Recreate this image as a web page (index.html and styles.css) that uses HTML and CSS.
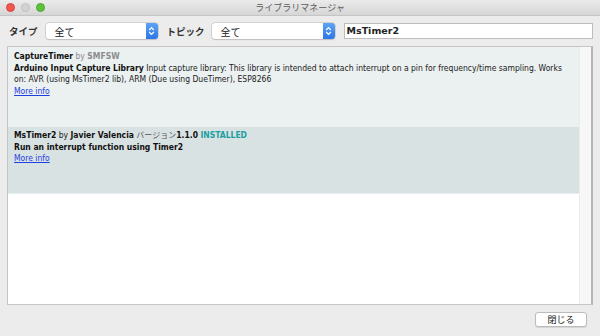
FILE: index.html
```html
<!DOCTYPE html>
<html lang="ja">

<head>
    <meta charset="UTF-8">
    <title>ライブラリマネージャ</title>
    <link rel="stylesheet" href="styles.css">
</head>

<body>
    <div class="window">
        <div class="titlebar">
            <div class="lights">
                <span class="light red"></span>
                <span class="light gray"></span>
                <span class="light green"></span>
            </div>
            <div class="title">ライブラリマネージャ</div>
        </div>

        <div class="toolbar">
            <span class="label">タイプ</span>
            <div class="select sel-type">
                <span>全て</span>
                <span class="chev">
                    <svg width="7" height="10" viewBox="0 0 7 10"><path d="M1.2 4 L3.5 1.6 L5.8 4 M1.2 6 L3.5 8.4 L5.8 6" fill="none" stroke="#fff" stroke-width="1.2"/></svg>
                </span>
            </div>
            <span class="label">トピック</span>
            <div class="select sel-topic">
                <span>全て</span>
                <span class="chev">
                    <svg width="7" height="10" viewBox="0 0 7 10"><path d="M1.2 4 L3.5 1.6 L5.8 4 M1.2 6 L3.5 8.4 L5.8 6" fill="none" stroke="#fff" stroke-width="1.2"/></svg>
                </span>
            </div>
            <div class="search">MsTimer2</div>
        </div>

        <div class="list">
            <div class="rows">
                <div class="row row-a">
                    <div><b>CaptureTimer</b> <span class="by">by <b>SMFSW</b></span></div>
                    <div><b>Arduino Input Capture Library</b> Input capture library: This library is intended to attach interrupt on a pin for frequency/time sampling. Works on: AVR (using MsTimer2 lib), ARM (Due using DueTimer), ESP8266</div>
                    <a href="#">More info</a>
                </div>
                <div class="row row-b">
                    <div><b>MsTimer2</b> by <b>Javier Valencia</b> <span class="ver">バージョン</span><b>1.1.0</b> <b class="installed">INSTALLED</b></div>
                    <div><b>Run an interrupt function using Timer2</b></div>
                    <a href="#">More info</a>
                </div>
            </div>
            <div class="scrollbar"></div>
        </div>

        <div class="footer">
            <button>閉じる</button>
        </div>
    </div>
</body>

</html>
```

FILE: styles.css
```css
* {
    margin: 0;
    padding: 0;
    box-sizing: border-box;
}

body {
    width: 600px;
    height: 336px;
    overflow: hidden;
    background-color: #ececec;
    font-family: "Noto Sans CJK JP", sans-serif;
}

.window {
    height: 336px;
    display: flex;
    flex-direction: column;
}

.titlebar {
    height: 16px;
    display: flex;
    align-items: center;
    position: relative;
    background: linear-gradient(#ebebeb, #d6d6d6);
    border-bottom: 1px solid #c4c4c4;
}

.lights {
    display: flex;
    gap: 6px;
    padding-left: 6px;
}

.light {
    width: 9px;
    height: 9px;
    border-radius: 50%;
}

.red {
    background-color: #f0574e;
    border: 1px solid #d9443c;
}

.gray {
    background-color: #d2d2d2;
    border: 1px solid #c0c0c0;
}

.green {
    background-color: #5cc23a;
    border: 1px solid #4aa82b;
}

.title {
    position: absolute;
    left: 0;
    right: 0;
    text-align: center;
    font-size: 9px;
    color: #5a5a5a;
    line-height: 16px;
}

.toolbar {
    display: flex;
    align-items: center;
    height: 30px;
    padding: 0 7px 0 9px;
}

.label {
    font-size: 9.5px;
    font-weight: bold;
    color: #333;
}

.select {
    height: 16px;
    display: flex;
    align-items: center;
    justify-content: space-between;
    background-color: #fff;
    border-radius: 3px;
    box-shadow: 0 0 0 0.5px #b8b8b8, 0 1px 1px rgba(0,0,0,0.15);
    font-size: 10px;
    color: #222;
    padding-left: 9px;
}

.sel-type {
    width: 112px;
    margin: 0 9px 0 8px;
}

.sel-topic {
    width: 123px;
    margin: 0 9px 0 7px;
}

.chev {
    width: 12px;
    height: 16px;
    background: linear-gradient(#5fa3f6, #2d76e6);
    border-radius: 0 3px 3px 0;
    display: flex;
    align-items: center;
    justify-content: center;
}

.search {
    flex: 1;
    height: 16px;
    background-color: #fff;
    border: 1px solid #bdbdbd;
    font-family: "DejaVu Sans", sans-serif;
    font-size: 9.5px;
    font-weight: bold;
    color: #222;
    padding-left: 2px;
    line-height: 14px;
}

.list {
    margin: 0 7px 0 7px;
    height: 259px;
    background-color: #fff;
    border: 1px solid #c6c6c6;
    border-right: 2px solid #b5b5b5;
    display: flex;
}

.rows {
    flex: 1;
}

.scrollbar {
    width: 12px;
    background-color: #f7f7f7;
    border-left: 1px solid #ececec;
}

.row {
    font-family: "DejaVu Sans Condensed", "DejaVu Sans", sans-serif;
    font-size: 8.5px;
    line-height: 11.5px;
    color: #222;
    padding: 4px 14px 0 6px;
}

.row b {
    color: #111;
}

.row-a {
    height: 80px;
    background-color: #ebf0f0;
}

.row-b {
    height: 67px;
    padding-top: 3px;
    background-color: #d9e2e2;
    border-bottom: 1px solid #e6efef;
}

.by,
.by b {
    color: #8c8c8c;
}

.ver {
    font-family: "Noto Sans CJK JP", sans-serif;
    font-size: 8px;
    line-height: 1;
    color: #555;
}

.installed {
    color: #1aa0a0 !important;
}

.row a {
    color: #1f3fe0;
}

.footer {
    flex: 1;
    display: flex;
    justify-content: flex-end;
    align-items: flex-start;
    padding: 7px 13px 0 0;
}

button {
    width: 52px;
    height: 15px;
    background-color: #fff;
    border: 1px solid #bcbcbc;
    border-radius: 3px;
    box-shadow: 0 1px 1px rgba(0,0,0,0.1);
    font-family: "Noto Sans CJK JP", sans-serif;
    font-size: 9px;
    color: #222;
}
```
